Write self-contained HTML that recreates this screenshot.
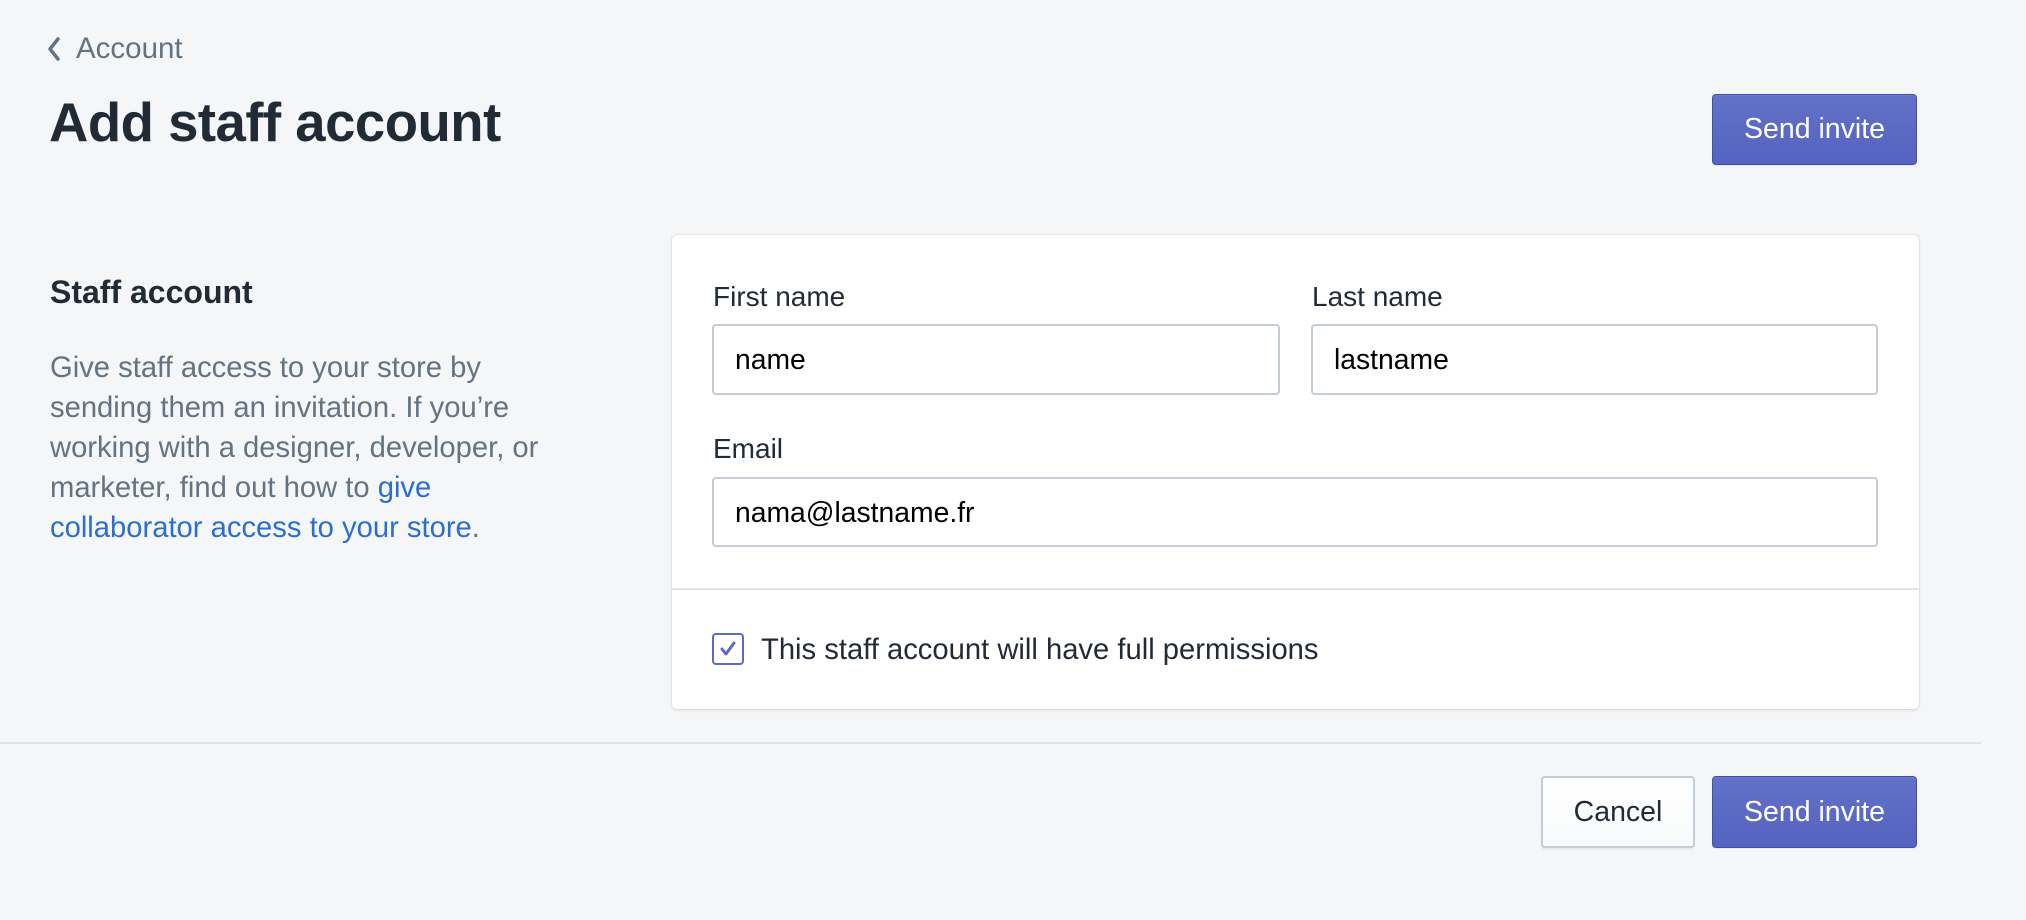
<!DOCTYPE html>
<html><head><meta charset="utf-8"><style>
*{box-sizing:border-box;margin:0;padding:0}
body{width:2026px;height:920px;background:#f4f6f8;font-family:"Liberation Sans",sans-serif;color:#212b36;position:relative;overflow:hidden}
.abs{position:absolute}
.btnp{position:absolute;background:linear-gradient(#6371c7,#5563c1);border:1px solid #3f4eae;border-radius:4px;color:#fff;font-size:28.5px;display:flex;align-items:center;justify-content:center;box-shadow:inset 0 1px 0 0 #6f7bcb,0 1px 0 rgba(22,29,37,.05)}
.btns{position:absolute;background:linear-gradient(#fff,#f9fafb);border:2px solid #c4cdd5;border-radius:4px;color:#212b36;font-size:28.5px;display:flex;align-items:center;justify-content:center;box-shadow:0 2px 0 rgba(22,29,37,.05)}
.lbl{position:absolute;font-size:28px;line-height:32px}
.inp{position:absolute;border:2px solid #c4cdd5;border-radius:4px;background:#fff;font-size:28.3px;padding-left:21px;display:flex;align-items:center;color:#000}
</style></head><body>
<svg class="abs" style="left:46px;top:36px" width="16" height="26" viewBox="0 0 16 26"><path d="M12 3 L4 13 L12 23" fill="none" stroke="#637381" stroke-width="3.5" stroke-linecap="round" stroke-linejoin="round"/></svg>
<div class="abs" style="left:76px;top:32px;font-size:29.5px;color:#637381">Account</div>
<div class="abs" style="left:49px;top:91px;font-size:54.5px;font-weight:bold;letter-spacing:-0.5px">Add staff account</div>
<div class="btnp" style="left:1712px;top:94px;width:205px;height:71px">Send invite</div>
<div class="abs" style="left:50px;top:274px;font-size:32px;font-weight:bold">Staff account</div>
<div class="abs" style="left:50px;top:348px;width:500px;font-size:29.2px;line-height:40px;color:#637381">Give staff access to your store by sending them an invitation. If you’re working with a designer, developer, or marketer, find out how to <span style="color:#2c6ecb">give collaborator access to your store</span>.</div>
<div class="abs" style="left:672px;top:235px;width:1247px;height:474px;background:#fff;border-radius:5px;box-shadow:0 0 0 1px rgba(63,63,68,.05),0 1px 3px 0 rgba(63,63,68,.15)"></div>
<div class="abs" style="left:672px;top:588px;width:1247px;height:2px;background:#dfe3e8"></div>
<div class="lbl" style="left:713px;top:281px">First name</div>
<div class="inp" style="left:712px;top:324px;width:568px;height:71px">name</div>
<div class="lbl" style="left:1312px;top:281px">Last name</div>
<div class="inp" style="left:1311px;top:324px;width:567px;height:71px">lastname</div>
<div class="lbl" style="left:713px;top:433px">Email</div>
<div class="inp" style="left:712px;top:477px;width:1166px;height:70px">nama@lastname.fr</div>
<div class="abs" style="left:712px;top:633px;width:32px;height:32px;border:2px solid #5c6ac4;border-radius:4px;background:#fff"></div>
<svg class="abs" style="left:718px;top:639px" width="20" height="20" viewBox="0 0 20 20"><path d="M4 10 L8 15 L16 4" fill="none" stroke="#5c6ac4" stroke-width="3" stroke-linecap="round" stroke-linejoin="round"/></svg>
<div class="abs" style="left:761px;top:634px;font-size:29.2px;line-height:32px">This staff account will have full permissions</div>
<div class="abs" style="left:0;top:742px;width:1981px;height:2px;background:#dfe3e8"></div>
<div class="btns" style="left:1541px;top:776px;width:154px;height:72px">Cancel</div>
<div class="btnp" style="left:1712px;top:776px;width:205px;height:72px">Send invite</div>
</body></html>
